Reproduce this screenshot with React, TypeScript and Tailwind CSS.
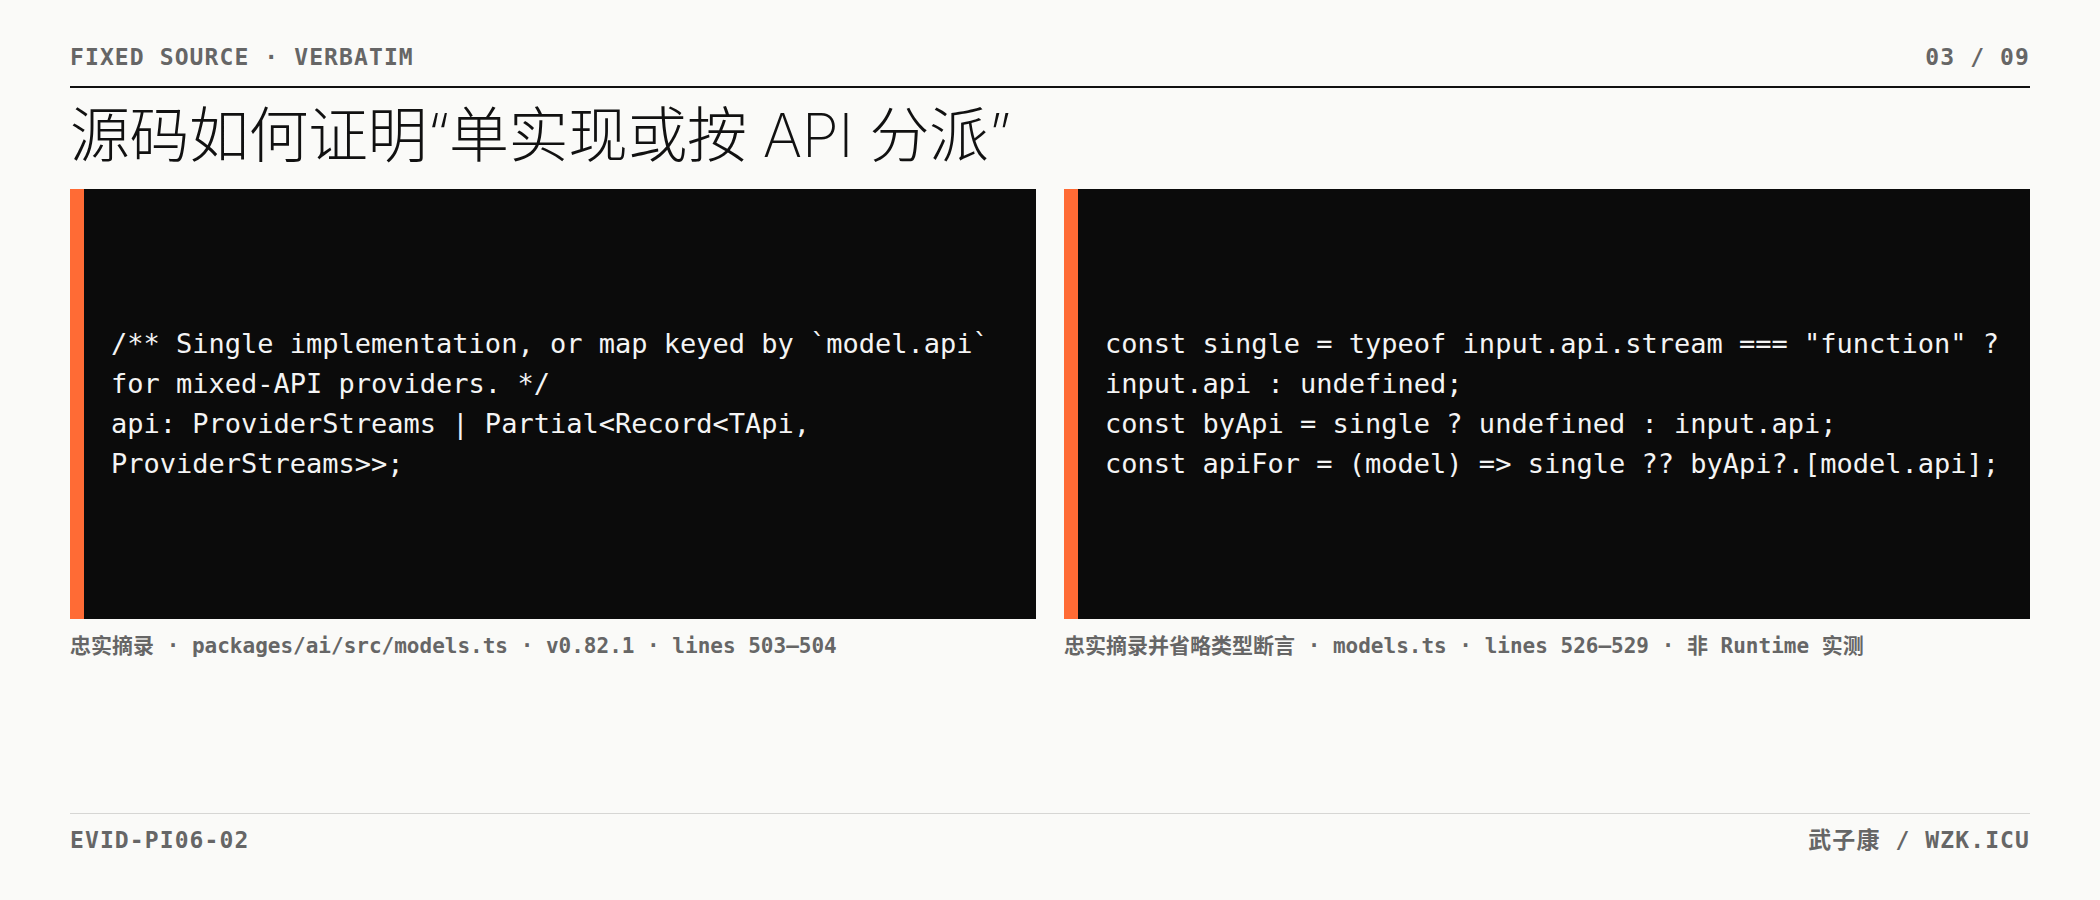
const mono = "font-['DejaVu_Sans_Mono','Noto_Sans_CJK_SC',monospace]";

function CodePanel({ lines }: { lines: string }) {
  return (
    <div className="flex h-[430px] bg-[#0b0b0b]">
      <div className="w-[14px] shrink-0 bg-[#ff6b35]" />
      <div className="flex flex-1 items-center pl-[27px] pr-[24px]">
        <pre
          className={`${mono} whitespace-pre-wrap text-[27px] leading-[40px] text-[#f4f4f4]`}
        >
          {lines}
        </pre>
      </div>
    </div>
  );
}

export default function App() {
  return (
    <main className="flex h-[900px] w-full flex-col bg-[#fafaf8] px-[70px] pt-[43px] pb-[46px]">
      {/* HEADER */}
      <header
        className={`${mono} flex items-center justify-between text-[23px] leading-[28px] font-bold tracking-[1.1px] text-[#666666]`}
      >
        <span>FIXED SOURCE · VERBATIM</span>
        <span>03 / 09</span>
      </header>
      <div className="mt-[15px] h-[2px] bg-[#111111]" />

      <h1 className="mt-[8px] font-['Inter','Noto_Sans_CJK_SC',sans-serif] text-[60px] leading-[78px] font-extralight tracking-[-0.5px] text-[#111111]">
        源码如何证明“单实现或按 API 分派”
      </h1>

      {/* PANELS */}
      <section className="mt-[15px] grid grid-cols-2 gap-[28px]">
        <div>
          <CodePanel
            lines={
              "/** Single implementation, or map keyed by `model.api` for mixed-API providers. */\napi: ProviderStreams | Partial<Record<TApi, ProviderStreams>>;"
            }
          />
          <p
            className={`${mono} mt-[14px] text-[21px] leading-[26px] font-bold text-[#666666]`}
          >
            忠实摘录 · packages/ai/src/models.ts · v0.82.1 · lines 503–504
          </p>
        </div>
        <div>
          <CodePanel
            lines={
              'const single = typeof input.api.stream === "function" ? input.api : undefined;\nconst byApi = single ? undefined : input.api;\nconst apiFor = (model) => single ?? byApi?.[model.api];'
            }
          />
          <p
            className={`${mono} mt-[14px] text-[21px] leading-[26px] font-bold text-[#666666]`}
          >
            忠实摘录并省略类型断言 · models.ts · lines 526–529 · 非 Runtime 实测
          </p>
        </div>
      </section>

      <div className="flex-1" />

      {/* FOOTER */}
      <footer className="border-t border-[#d6d6d4] pt-[12px]">
        <div
          className={`${mono} flex items-center justify-between text-[23px] leading-[28px] font-bold tracking-[1.1px] text-[#666666]`}
        >
          <span>EVID-PI06-02</span>
          <span>武子康 / WZK.ICU</span>
        </div>
      </footer>
    </main>
  );
}
